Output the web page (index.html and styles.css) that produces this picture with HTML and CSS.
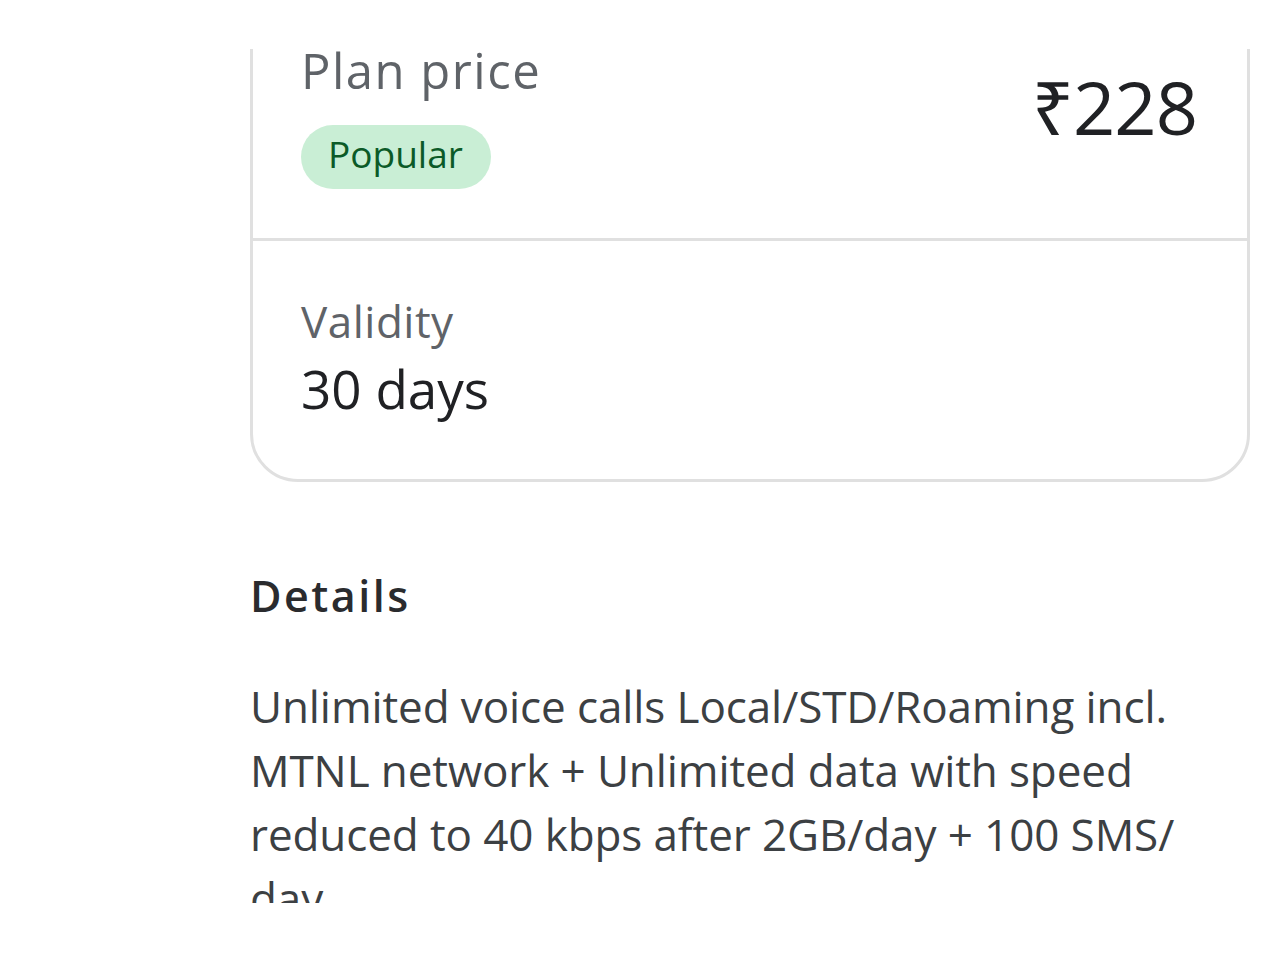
FILE: index.html
```html
<!DOCTYPE html>
<html lang="en">
<head>
<meta charset="utf-8">
<title>Plan details</title>
<link rel="stylesheet" href="styles.css">
</head>
<body>
<div class="viewport">
  <div class="page">
    <section class="card">
      <div class="card-top">
        <div class="plan-col">
          <div class="label">Plan price</div>
          <span class="chip">Popular</span>
        </div>
        <div class="price">₹228</div>
      </div>
      <div class="card-bottom">
        <div class="label small">Validity</div>
        <div class="value">30 days</div>
      </div>
    </section>
    <h2 class="details-title">Details</h2>
    <p class="details-text">Unlimited voice calls Local/STD/Roaming incl.<br>MTNL network + Unlimited data with speed<br>reduced to 40 kbps after 2GB/day + 100 SMS/<br>day</p>
  </div>
</div>
</body>
</html>
```
FILE: styles.css
```css
html, body {
  margin: 0;
  padding: 0;
  background: #ffffff;
}
body {
  font-family: "Open Sans", "Noto Sans", "DejaVu Sans", sans-serif;
  color: #202124;
}
.viewport {
  margin-top: 49px;
  height: 854px;
  overflow: hidden;
}
.page {
  margin-left: 250px;
  width: 1000px;
  margin-top: -49px;
}
.card {
  border: 3px solid #e0e0e0;
  border-radius: 48px;
  box-sizing: border-box;
}
.card-top {
  display: flex;
  justify-content: space-between;
  align-items: flex-start;
  padding: 35px 50px 49px 48px;
  border-bottom: 3px solid #e0e0e0;
}
.plan-col {
  display: flex;
  flex-direction: column;
  align-items: flex-start;
}
.label {
  font-size: 49px;
  line-height: 64px;
  color: #5f6368;
  letter-spacing: 1.5px;
}
.label.small {
  font-size: 44px;
  line-height: 56px;
  letter-spacing: 0.5px;
}
.chip {
  margin-top: 23px;
  background: #c9eed5;
  color: #0b5a27;
  font-size: 37px;
  line-height: 58px;
  padding: 0 28px 6px 27px;
  border-radius: 32px;
}
.price {
  margin-top: 24px;
  font-size: 74px;
  line-height: 90px;
  color: #202124;
  letter-spacing: -1px;
}
.card-bottom {
  padding: 52px 48px 58px 48px;
}
.value {
  margin-top: 8px;
  font-size: 53px;
  line-height: 64px;
  color: #202124;
}
.details-title {
  margin: 86px 0 0 0;
  font-size: 43px;
  line-height: 56px;
  font-weight: 600;
  color: #2a2b2e;
  letter-spacing: 2.5px;
}
.details-text {
  margin: 50px 0 0 0;
  font-size: 44px;
  line-height: 64px;
  color: #3c4043;
  white-space: nowrap;
  letter-spacing: -0.1px;
}
```
